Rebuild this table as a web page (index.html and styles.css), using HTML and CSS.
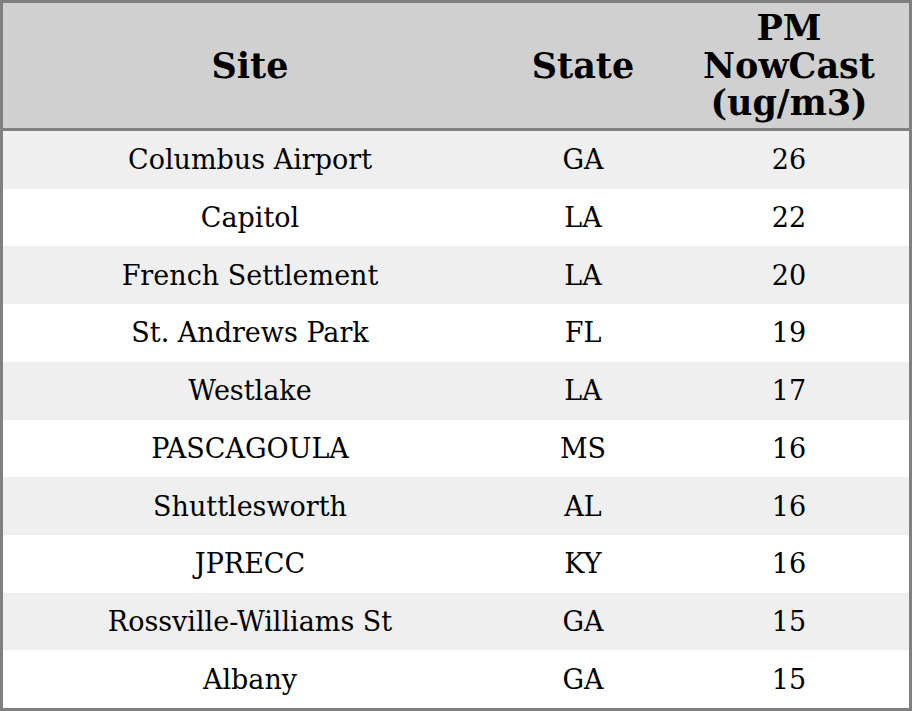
FILE: index.html
```html
<!DOCTYPE html>
<html>
<head>
<meta charset="utf-8">
<link rel="stylesheet" href="styles.css">
</head>
<body>
<div class="table">
  <div class="th">Site</div><div class="th">State</div><div class="th">PM<br>NowCast<br>(ug/m3)</div>
  <div class="td odd">Columbus Airport</div><div class="td odd">GA</div><div class="td odd">26</div>
  <div class="td">Capitol</div><div class="td">LA</div><div class="td">22</div>
  <div class="td odd">French Settlement</div><div class="td odd">LA</div><div class="td odd">20</div>
  <div class="td">St. Andrews Park</div><div class="td">FL</div><div class="td">19</div>
  <div class="td odd">Westlake</div><div class="td odd">LA</div><div class="td odd">17</div>
  <div class="td">PASCAGOULA</div><div class="td">MS</div><div class="td">16</div>
  <div class="td odd">Shuttlesworth</div><div class="td odd">AL</div><div class="td odd">16</div>
  <div class="td">JPRECC</div><div class="td">KY</div><div class="td">16</div>
  <div class="td odd">Rossville-Williams St</div><div class="td odd">GA</div><div class="td odd">15</div>
  <div class="td">Albany</div><div class="td">GA</div><div class="td">15</div>
</div>
</body>
</html>
```

FILE: styles.css
```css
html, body {
  margin: 0;
  padding: 0;
  background: #ffffff;
}
.table {
  box-sizing: border-box;
  width: 912px;
  height: 711px;
  border: 3px solid #808080;
  display: grid;
  grid-template-columns: 494px 172px 240px;
  grid-template-rows: 128px repeat(10, 1fr);
  font-family: "DejaVu Serif", serif;
  color: #000;
}
.th {
  background: #d0d0d0;
  border-bottom: 3px solid #808080;
  font-weight: bold;
  font-size: 35px;
  line-height: 37.5px;
  display: flex;
  align-items: center;
  justify-content: center;
  text-align: center;
}
.td {
  font-size: 27px;
  display: flex;
  align-items: center;
  justify-content: center;
  text-align: center;
  background: #ffffff;
}
.td.odd {
  background: #efefef;
}
```
